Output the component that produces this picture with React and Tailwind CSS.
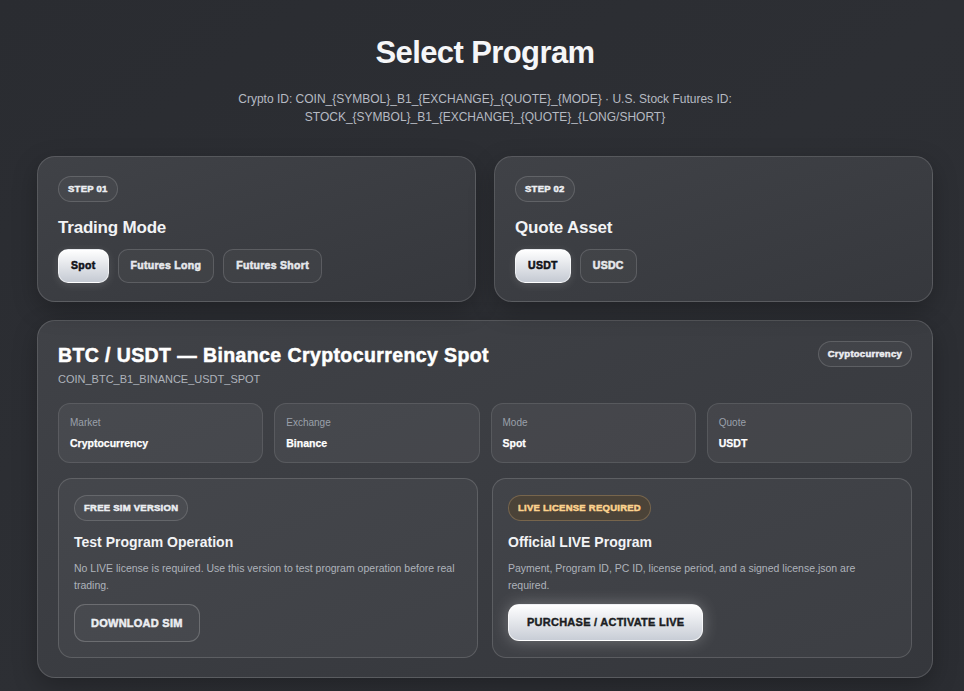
import { useState } from 'react'

const font = { fontFamily: '"Liberation Sans", Arial, sans-serif' }

const MODES = ['Spot', 'Futures Long', 'Futures Short']
const QUOTES = ['USDT', 'USDC']

const ID_HINT =
  'Crypto ID: COIN_{SYMBOL}_B1_{EXCHANGE}_{QUOTE}_{MODE} · U.S. Stock Futures ID: STOCK_{SYMBOL}_B1_{EXCHANGE}_{QUOTE}_{LONG/SHORT}'

function Badge({ children, tone = 'default' }) {
  const cls =
    tone === 'amber'
      ? 'border-[#8a7456]/70 bg-[#4b4338] text-[#fcd28e]'
      : 'border-white/15 bg-white/[0.04] text-[#eceef2]'
  return (
    <span
      className={`inline-flex h-[26px] items-center rounded-full border px-[9px] text-[9.5px] font-black tracking-[0.25px] [-webkit-text-stroke:0.5px_currentColor] ${cls}`}
    >
      {children}
    </span>
  )
}

function Chip({ active, children, onClick }) {
  return (
    <button
      onClick={onClick}
      className={`h-[34px] rounded-[10px] border px-[12px] text-[10.5px] font-black tracking-[0.3px] [-webkit-text-stroke:0.55px_currentColor] ${
        active
          ? 'border-white/60 bg-gradient-to-b from-white to-[#c5cad3] text-[#111318] shadow-[0_2px_8px_rgba(255,255,255,0.12)]'
          : 'border-white/15 bg-white/[0.03] text-[#e6e8ec]'
      }`}
    >
      {children}
    </button>
  )
}

function Info({ label, value }) {
  return (
    <div className="flex h-[60px] flex-col justify-center rounded-[12px] border border-white/10 bg-white/[0.05] px-[11px]">
      <div className="text-[10px] leading-[12px] text-[#9aa0aa]">{label}</div>
      <div className="mt-[8px] text-[10.5px] font-bold leading-[13px] text-white [-webkit-text-stroke:0.25px_currentColor]">
        {value}
      </div>
    </div>
  )
}

export default function App() {
  const [mode, setMode] = useState('Spot')
  const [quote, setQuote] = useState('USDT')

  return (
    <div
      style={font}
      className="min-h-screen bg-gradient-to-br from-[#2a2c31] via-[#2d2f34] to-[#2b2d32] pl-[37px] pr-[31px] pb-10 text-white"
    >
      <div className="pt-[33px] text-center">
        <h1 className="text-[31px] font-bold leading-[40px] tracking-[-0.6px] text-[#f5f6f8]">Select Program</h1>
        <p className="mx-auto mt-[17px] max-w-[520px] text-[12px] leading-[18px] text-[#b6bac2]">{ID_HINT}</p>
      </div>

      <div className="mt-[30px] grid grid-cols-2 gap-[18px]">
        <section className="h-[146px] rounded-[18px] border border-white/15 bg-gradient-to-br from-[#404247] to-[#36383d] px-[20px] pt-[18px] shadow-[0_8px_24px_rgba(0,0,0,0.25)]">
          <Badge>STEP 01</Badge>
          <h2 className="mt-[15px] text-[17px] font-bold leading-[22px] tracking-[-0.2px] text-[#f2f3f5]">Trading Mode</h2>
          <div className="mt-[10px] flex gap-[9px]">
            {MODES.map((m) => (
              <Chip key={m} active={mode === m} onClick={() => setMode(m)}>
                {m}
              </Chip>
            ))}
          </div>
        </section>

        <section className="h-[146px] rounded-[18px] border border-white/15 bg-gradient-to-br from-[#404247] to-[#36383d] px-[20px] pt-[18px] shadow-[0_8px_24px_rgba(0,0,0,0.25)]">
          <Badge>STEP 02</Badge>
          <h2 className="mt-[15px] text-[17px] font-bold leading-[22px] tracking-[-0.2px] text-[#f2f3f5]">Quote Asset</h2>
          <div className="mt-[10px] flex gap-[9px]">
            {QUOTES.map((q) => (
              <Chip key={q} active={quote === q} onClick={() => setQuote(q)}>
                {q}
              </Chip>
            ))}
          </div>
        </section>
      </div>

      <section className="mt-[18px] rounded-[18px] border border-white/15 bg-gradient-to-br from-[#404247] to-[#35373c] px-[20px] pt-[20px] pb-[19px] shadow-[0_8px_24px_rgba(0,0,0,0.25)]">
        <div className="flex items-start justify-between">
          <div>
            <h2 className="pt-[2px] text-[19.5px] font-black leading-[24px] tracking-[0.4px] text-white [-webkit-text-stroke:0.5px_currentColor]">
              BTC / USDT — Binance Cryptocurrency Spot
            </h2>
            <div className="mt-[5px] text-[11px] leading-[14px] text-[#aeb3bb]">COIN_BTC_B1_BINANCE_USDT_SPOT</div>
          </div>
          <Badge>Cryptocurrency</Badge>
        </div>

        <div className="mt-[17px] grid grid-cols-4 gap-[11px]">
          <Info label="Market" value="Cryptocurrency" />
          <Info label="Exchange" value="Binance" />
          <Info label="Mode" value="Spot" />
          <Info label="Quote" value="USDT" />
        </div>

        <div className="mt-[15px] grid grid-cols-2 gap-[14px]">
          <div className="h-[180px] rounded-[14px] border border-white/15 bg-white/[0.04] px-[15px] pt-[15px]">
            <Badge>FREE SIM VERSION</Badge>
            <h3 className="mt-[12px] text-[14px] font-bold leading-[18px] text-[#f2f3f5]">Test Program Operation</h3>
            <p className="mt-[9px] text-[10.5px] leading-[17px] text-[#aeb3bb]">
              No LIVE license is required. Use this version to test program operation before real trading.
            </p>
            <button className="mt-[10px] h-[38px] rounded-[11px] border border-white/20 bg-white/[0.03] px-[16px] text-[11px] font-black tracking-[0.25px] text-[#eceef2] [-webkit-text-stroke:0.5px_currentColor]">
              DOWNLOAD SIM
            </button>
          </div>

          <div className="h-[180px] rounded-[14px] border border-white/15 bg-white/[0.04] px-[15px] pt-[15px]">
            <Badge tone="amber">LIVE LICENSE REQUIRED</Badge>
            <h3 className="mt-[12px] text-[14px] font-bold leading-[18px] text-[#f2f3f5]">Official LIVE Program</h3>
            <p className="mt-[9px] text-[10.5px] leading-[17px] text-[#aeb3bb]">
              Payment, Program ID, PC ID, license period, and a signed license.json are required.
            </p>
            <button className="mt-[10px] h-[37px] rounded-[11px] border border-white/70 bg-gradient-to-b from-white to-[#c8cdd6] px-[18px] text-[11px] font-black tracking-[0.25px] text-[#1b1d22] shadow-[0_0_16px_rgba(255,255,255,0.28)] [-webkit-text-stroke:0.4px_currentColor]">
              PURCHASE / ACTIVATE LIVE
            </button>
          </div>
        </div>
      </section>
    </div>
  )
}
